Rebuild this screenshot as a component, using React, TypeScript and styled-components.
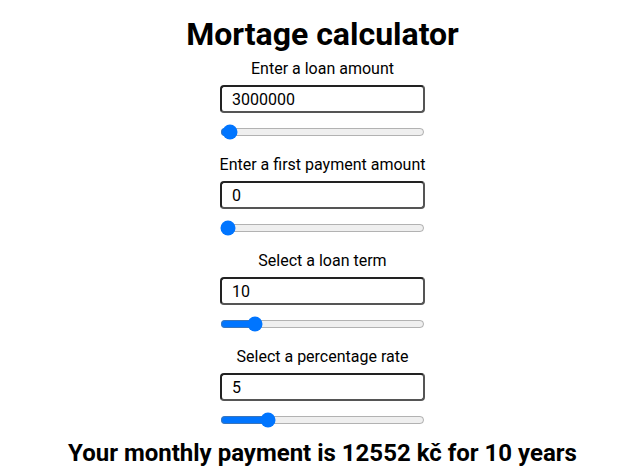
import React, { useState } from "react";
import styled, { createGlobalStyle } from "styled-components";

const Global = createGlobalStyle`
  body { margin: 0; font-family: Roboto, "Liberation Sans", sans-serif; background: #fff; color: #000; }
`;

const Page = styled.div`
  display: flex;
  flex-direction: column;
  align-items: center;
  padding: 14px 0 0 18px;
`;

const Title = styled.h1`
  margin: 0 0 5px;
  font-size: 32px;
  font-weight: 700;
  line-height: 40px;
`;

const Field = styled.div`
  display: flex;
  flex-direction: column;
  align-items: center;
  margin-bottom: 15px;
`;

const Label = styled.label`
  font-size: 16px;
  line-height: 19px;
  margin-bottom: 7px;
`;

const NumberInput = styled.input`
  box-sizing: border-box;
  width: 205px;
  height: 28px;
  border: 2px solid #555;
  border-top-color: #222;
  border-left-color: #222;
  border-radius: 4px;
  padding: 0 10px;
  font-family: Roboto, "Liberation Sans", sans-serif;
  font-size: 16px;
  outline: none;
`;

const Range = styled.input`
  width: 205px;
  margin: 11px 0 0;
  height: 16px;
`;

const Result = styled.h2`
  margin: -3px 0 0;
  font-size: 24px;
  font-weight: 700;
  line-height: 26px;
`;

export default function App() {
  const [amount, setAmount] = useState(3000000);
  const [first, setFirst] = useState(0);
  const [term, setTerm] = useState(10);
  const [rate, setRate] = useState(5);
  const fields = [
    { label: "Enter a loan amount", value: amount, set: setAmount, min: 0, max: 300000000 },
    { label: "Enter a first payment amount", value: first, set: setFirst, min: 0, max: 10000000 },
    { label: "Select a loan term", value: term, set: setTerm, min: 0, max: 70 },
    { label: "Select a percentage rate", value: rate, set: setRate, min: 1, max: 20 },
  ];
  return (
    <>
      <Global />
      <Page>
        <Title>Mortage calculator</Title>
        {fields.map((f) => (
          <Field key={f.label}>
            <Label>{f.label}</Label>
            <NumberInput value={f.value} onChange={(e) => f.set(Number(e.target.value) || 0)} />
            <Range type="range" min={f.min} max={f.max} value={f.value} onChange={(e) => f.set(Number(e.target.value))} />
          </Field>
        ))}
        <Result>Your monthly payment is 12552 kč for 10 years</Result>
      </Page>
    </>
  );
}
